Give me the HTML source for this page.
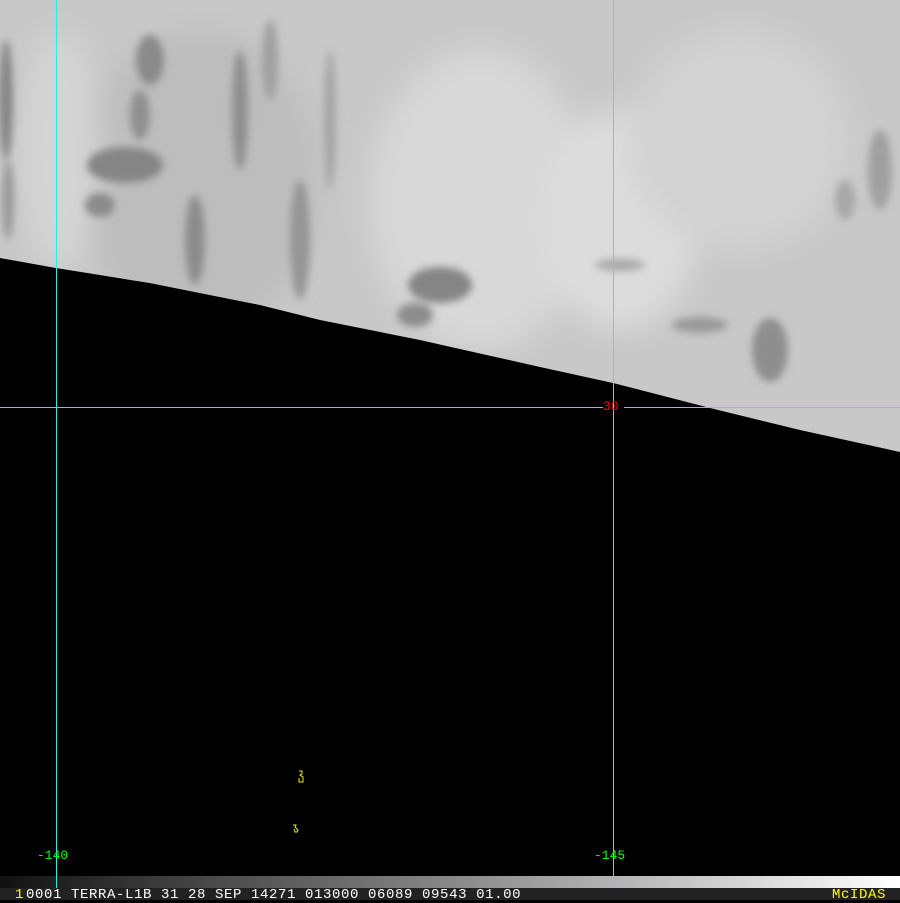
<!DOCTYPE html>
<html><head><meta charset="utf-8"><style>
html,body{margin:0;padding:0;background:#000;width:900px;height:900px;overflow:hidden}
.t{font-family:"Liberation Mono","DejaVu Sans Mono",monospace;position:absolute;font-size:14px;line-height:12px;white-space:pre}
</style></head><body>
<svg width="900" height="900" style="position:absolute;left:0;top:0">
<defs>
<clipPath id="c"><polygon points="0,0 900,0 900,452 800,430 710,408 613,383 540,367 420,340 320,320 260,305 150,283 56,268 0,258"/></clipPath>
<filter id="b" x="-50%" y="-50%" width="200%" height="200%"><feGaussianBlur stdDeviation="4"/></filter>
<filter id="b2" x="-50%" y="-50%" width="200%" height="200%"><feGaussianBlur stdDeviation="14"/></filter>
<linearGradient id="g" x1="0" x2="1"><stop offset="0" stop-color="#111"/><stop offset="1" stop-color="#fff"/></linearGradient>
</defs>
<rect width="900" height="900" fill="#000"/>
<g clip-path="url(#c)">
<rect width="900" height="460" fill="#c8c8c8"/>
<g filter="url(#b2)">
<ellipse cx="480" cy="200" rx="110" ry="150" fill="#d8d8d8"/>
<ellipse cx="620" cy="220" rx="80" ry="110" fill="#dcdcdc"/>
<ellipse cx="740" cy="140" rx="110" ry="110" fill="#d2d2d2"/>
<ellipse cx="200" cy="180" rx="120" ry="150" fill="#bdbdbd"/>
<ellipse cx="60" cy="150" rx="40" ry="120" fill="#d4d4d4"/>
</g>
<g filter="url(#b)">
<ellipse cx="125" cy="165" rx="38" ry="18" fill="#858585"/>
<ellipse cx="100" cy="205" rx="15" ry="12" fill="#8a8a8a"/>
<ellipse cx="150" cy="60" rx="14" ry="25" fill="#8a8a8a"/>
<ellipse cx="140" cy="115" rx="10" ry="25" fill="#909090"/>
<ellipse cx="240" cy="110" rx="8" ry="60" fill="#8e8e8e"/>
<ellipse cx="195" cy="240" rx="10" ry="45" fill="#8c8c8c"/>
<ellipse cx="300" cy="240" rx="10" ry="60" fill="#959595"/>
<ellipse cx="330" cy="120" rx="6" ry="70" fill="#a5a5a5"/>
<ellipse cx="270" cy="60" rx="8" ry="40" fill="#a0a0a0"/>
<ellipse cx="6" cy="100" rx="7" ry="60" fill="#858585"/>
<ellipse cx="8" cy="200" rx="6" ry="40" fill="#999"/>
<ellipse cx="440" cy="285" rx="32" ry="18" fill="#858585"/>
<ellipse cx="415" cy="315" rx="18" ry="12" fill="#8c8c8c"/>
<ellipse cx="770" cy="350" rx="18" ry="32" fill="#8e8e8e"/>
<ellipse cx="700" cy="325" rx="28" ry="8" fill="#9a9a9a"/>
<ellipse cx="880" cy="170" rx="12" ry="40" fill="#a0a0a0"/>
<ellipse cx="845" cy="200" rx="10" ry="20" fill="#a8a8a8"/>
<ellipse cx="620" cy="265" rx="25" ry="6" fill="#a8a8a8"/>
</g>
</g>
<rect x="0" y="876" width="900" height="12" fill="url(#g)"/>
<rect x="0" y="888" width="900" height="12" fill="#222"/>
<line x1="56.5" y1="0" x2="56.5" y2="888" stroke="#2ee" stroke-width="1"/>
<line x1="613.5" y1="0" x2="613.5" y2="888" stroke="#2ee" stroke-width="1"/>
<line x1="0" y1="407.5" x2="603" y2="407.5" stroke="#2ee" stroke-width="1"/>
<line x1="624" y1="407.5" x2="900" y2="407.5" stroke="#2ee" stroke-width="1"/>
<path d="M299,771 l3,0 0,3 -2,1 3,2 0,5 -4,0 0,-4" fill="none" stroke="#ee0" stroke-width="1"/>
<path d="M293,825 l3,0 -1,2 3,3 -1,2 -2,0 -1,-3" fill="none" stroke="#ee0" stroke-width="1"/>
</svg>
<div class="t" style="left:603px;top:401px;color:#f00;font-size:13px">30</div>
<div class="t" style="left:37px;top:850px;color:#0f0;font-size:13px">-140</div>
<div class="t" style="left:594px;top:850px;color:#0f0;font-size:13px">-145</div>
<div class="t" style="left:15px;top:889px;color:#ff0">1</div>
<div class="t" style="left:26px;top:889px;color:#fff;letter-spacing:0.6px">0001 TERRA-L1B 31 28 SEP 14271 013000 06089 09543 01.00</div>
<div class="t" style="left:832px;top:889px;color:#ff0;letter-spacing:0.6px">McIDAS</div>
</body></html>
